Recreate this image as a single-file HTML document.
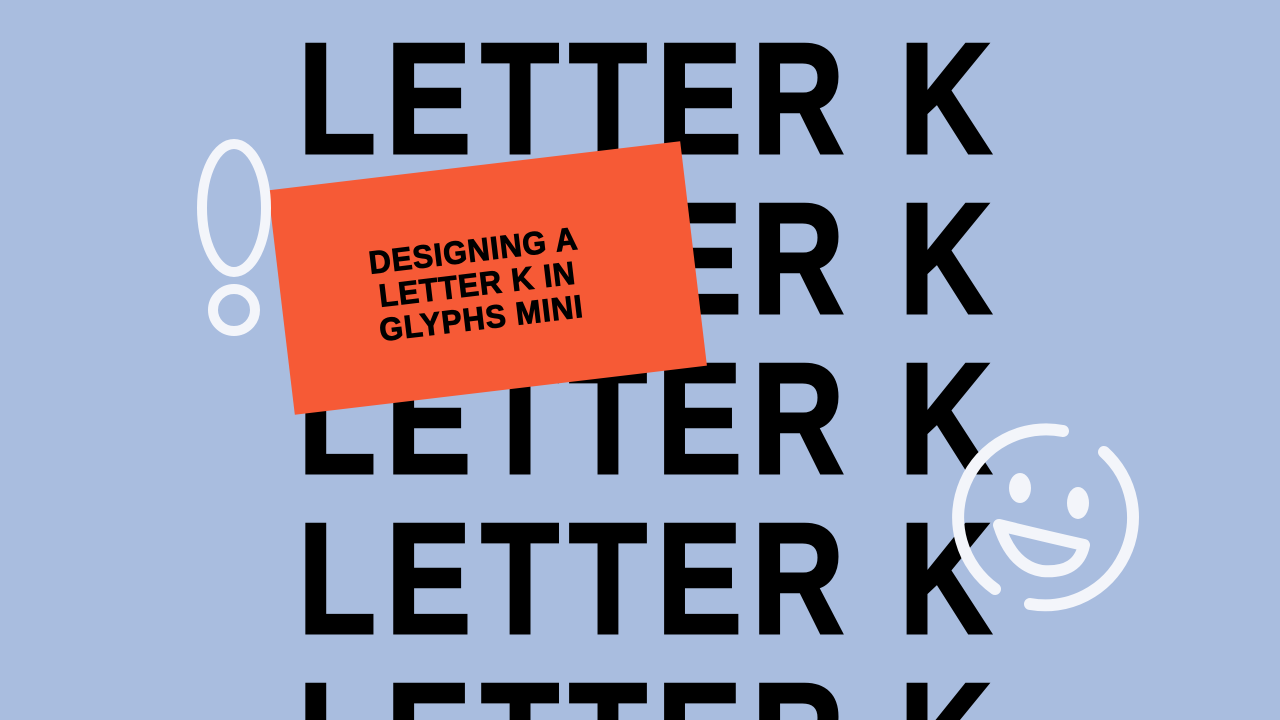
<!DOCTYPE html>
<html><head><style>
html,body{margin:0;padding:0;width:1280px;height:720px;overflow:hidden}
body{background:#A9BDDF;position:relative;font-family:"Liberation Sans",Arial,sans-serif}
.wrap{position:absolute;left:0;top:0;width:1280px;height:720px;overflow:hidden}
.row{position:absolute;left:298px;font-weight:bold;font-size:158px;line-height:1;color:#000;white-space:nowrap;transform-origin:0 0;transform:scaleX(0.81);letter-spacing:12px;-webkit-text-stroke:3px #000}
.card{position:absolute;left:280px;top:165px;width:415px;height:226px;background:#F65A36;transform:rotate(-6.8deg);display:flex;align-items:center;justify-content:center}
.card div{font-weight:bold;font-size:32px;line-height:34px;text-align:center;color:#000;transform:scaleX(0.95);margin-left:-22px;margin-top:10px;-webkit-text-stroke:1px #000;letter-spacing:1px}
</style></head><body>
<div class="wrap">
<div class="row" style="top:20px">LETTER K</div>
<div class="row" style="top:180px">LETTER K</div>
<div class="row" style="top:340px">LETTER K</div>
<div class="row" style="top:500px">LETTER K</div>
<div class="row" style="top:660px">LETTER K</div>
<div class="card"><div>DESIGNING A<br>LETTER K IN<br>GLYPHS MINI</div></div>
<svg width="1280" height="720" style="position:absolute;left:0;top:0" fill="none" stroke="#F3F5FA" stroke-width="10" stroke-linecap="round" stroke-linejoin="round">
<ellipse cx="234" cy="208" rx="32" ry="64"/>
<circle cx="234" cy="310" r="21"/>
<g stroke-width="12">
<path d="M1063,431 A88,88 0 0 0 995,589"/>
<path d="M1104,452 A88,88 0 0 1 1030,604"/>
<path d="M999,525 Q1040,535 1084,545 Q1078,574 1042,571 Q1012,566 999,525 Z"/>
</g>
<ellipse cx="1020" cy="488" rx="11" ry="15" fill="#F3F5FA" stroke="none"/>
<ellipse cx="1078" cy="503" rx="11" ry="16" fill="#F3F5FA" stroke="none"/>
</svg>
</div>
</body></html>
